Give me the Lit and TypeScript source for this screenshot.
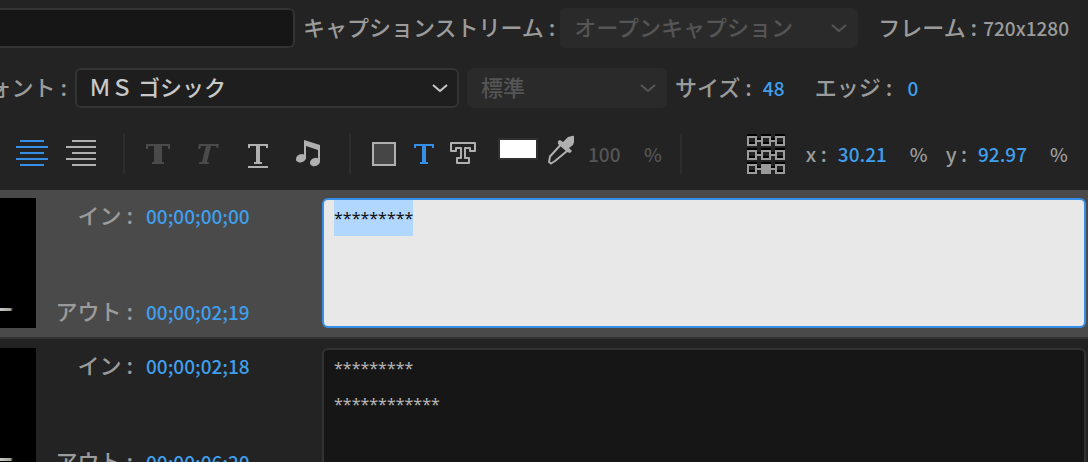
import { LitElement, html, css, svg } from "lit";
import { customElement, property, query } from "lit/decorators.js";
import { classMap } from "lit/directives/class-map.js";

const shared = css`
  * {
    box-sizing: border-box;
  }
  button,
  input,
  select,
  textarea {
    font: inherit;
    color: inherit;
    margin: 0;
    padding: 0;
    border: 0;
    border-radius: 0;
    background: none;
    outline: none;
    appearance: none;
  }
  label,
  .label {
    font-size: 22px;
    color: #9b9b9b;
    white-space: pre;
    padding-bottom: 4px;
  }
  .value {
    font-size: 19px;
    color: #3f9fec;
  }
`;

interface Caption {
  start: string;
  end: string;
  text: string;
  active: boolean;
}

@customElement("caption-row")
export class CaptionRow extends LitElement {
  @property({ attribute: false }) caption!: Caption;
  @query("textarea") private area!: HTMLTextAreaElement;

  static styles = [
    shared,
    css`
      :host {
        display: block;
      }
      .row {
        display: flex;
        padding: 8px 2px 9px 0;
        border-bottom: 2px solid #323232;
      }
      .active {
        background: #4a4a4a;
      }
      .thumb {
        flex: none;
        width: 36px;
        background: #000;
        display: flex;
        flex-direction: column;
        justify-content: flex-end;
        padding-bottom: 17px;
      }
      .glint {
        width: 13px;
        height: 3px;
        background: linear-gradient(90deg, #c8c8c8, #a8a49c 80%, #000);
      }
      .times {
        flex: none;
        width: 286px;
        display: flex;
        flex-direction: column;
        justify-content: space-between;
      }
      .time {
        display: grid;
        grid-template-columns: 97px 1fr;
        column-gap: 13px;
        height: 34px;
      }
      .time label {
        text-align: right;
        line-height: 32px;
      }
      .time input {
        width: 120px;
        height: 36px;
        line-height: 36px;
      }
      textarea {
        flex: 1;
        min-width: 0;
        height: 130px;
        resize: none;
        overflow: hidden;
        border: 2px solid #333;
        border-radius: 6px;
        padding: 0 10px;
        background: #161616;
        color: #b4b4b4;
        font-family: "Noto Sans", "Noto Sans CJK JP", sans-serif;
        font-weight: 400;
        font-size: 16px;
        line-height: 36px;
      }
      .active textarea {
        border-color: #378ee6;
        background: #e8e8e8;
        color: #101010;
      }
      textarea::selection {
        background: #b2d7ff;
        color: #101010;
      }
    `,
  ];

  firstUpdated() {
    if (this.caption.active) {
      this.area.focus();
      this.area.select();
    }
  }

  render() {
    const c = this.caption;
    return html`
      <div class=${classMap({ row: true, active: c.active })}>
        <div class="thumb"><div class="glint"></div></div>
        <div class="times">
          <div class="time">
            <label for="in">イン :</label>
            <input id="in" class="value" .value=${c.start} />
          </div>
          <div class="time">
            <label for="out">アウト :</label>
            <input id="out" class="value" .value=${c.end} />
          </div>
        </div>
        <textarea aria-label="キャプション" spellcheck="false" .value=${c.text}></textarea>
      </div>
    `;
  }
}

const bars = (short: number, long: number, right?: number) =>
  [0, 1, 2, 3, 4].map((i) => {
    const x = i % 2 ? long : short;
    const w = i % 2 ? (right ?? 50 - long) - long : (right ?? 50 - short) - short;
    return svg`<rect x=${x} y=${6 + i * 6} width=${w} height="2"/>`;
  });

const anchorCells = [0, 1, 2].flatMap((r) =>
  [0, 1, 2].map((c) => {
    const x = c * 14;
    const y = 2 + r * 14;
    const on = r === 2 && c === 1;
    return svg`
      <rect x=${x} y=${y - 2} width="10" height="2" fill="#000"/>
      ${c < 2
        ? svg`<rect x=${x + 10} y=${y + 4} width="4" height="2"/>
              <rect x=${x + 10} y=${y + 2} width="4" height="2" fill="#000"/>`
        : null}
      ${on
        ? svg`<rect x=${x} y=${y} width="10" height="10"/>`
        : svg`<path d="M${x} ${y}h10v10h-10zM${x + 2} ${y + 2}v6h6v-6z" fill-rule="evenodd"/>
              <rect x=${x + 2} y=${y + 6} width="6" height="2" fill="#000"/>`}
    `;
  })
);

const chevron = html`<svg class="chevron" width="16" height="8" viewBox="0 0 16 8" aria-hidden="true">
  <path d="M1 1L8 7L15 1" fill="none" stroke="currentColor" stroke-width="2" />
</svg>`;

@customElement("app-root")
export class AppRoot extends LitElement {
  private captions: Caption[] = [
    { start: "00;00;00;00", end: "00;00;02;19", text: "*********", active: true },
    { start: "00;00;02;18", end: "00;00;06;20", text: "*********\n************", active: false },
  ];

  static styles = [
    shared,
    css`
      :host {
        display: block;
        height: 100vh;
        overflow: hidden;
        background: #232323;
        color: #b0b0b0;
        font-family: "Noto Sans CJK JP", "Noto Sans", sans-serif;
        font-weight: 500;
        line-height: 40px;
      }
      .bar {
        display: flex;
        align-items: center;
        height: 40px;
      }
      .settings {
        display: grid;
        gap: 20px;
        padding-top: 8px;
      }
      .search {
        flex: 1;
        min-width: 0;
        height: 40px;
        border: 2px solid #333;
        border-left: 0;
        border-radius: 0 6px 6px 0;
        background: #161616;
      }
      .pick {
        display: grid;
        grid-template-columns: 1fr 16px;
        align-items: center;
        height: 40px;
        padding-right: 9px;
        border: 2px solid #333;
        border-radius: 6px;
        background: #1e1e1e;
        color: #c8c8c8;
        font-size: 22px;
      }
      .pick select {
        grid-area: 1 / 1 / 2 / 3;
        height: 36px;
        padding: 0 0 4px 12px;
        line-height: 32px;
        opacity: 1;
      }
      .chevron {
        grid-area: 1 / 2;
        pointer-events: none;
      }
      .off {
        border-color: #2a2a2a;
        background: #2a2a2a;
        color: #555;
      }
      .stream {
        width: 298px;
        margin: 0 20px 0 5px;
      }
      .font {
        width: 384px;
        margin: 0 8px;
      }
      .style {
        width: 200px;
        margin-right: 8px;
      }
      .first {
        margin-left: 8px;
      }
      .frame {
        font-size: 19px;
        margin: 0 19px 0 6px;
        color: #9b9b9b;
      }
      .clip {
        display: flex;
        justify-content: flex-end;
        width: 67px;
        overflow: hidden;
      }
      .number {
        width: 52px;
        height: 40px;
        margin-left: 11px;
      }
      .edge {
        margin-left: 15px;
      }
      .tools {
        margin: 26px 0 16px;
        padding-left: 7px;
      }
      .tool {
        flex: none;
        display: flex;
        width: 50px;
        height: 40px;
        fill: currentColor;
      }
      .narrow {
        width: 40px;
      }
      .on {
        color: #378ee6;
      }
      .dim {
        color: #4a4a4a;
      }
      .rule {
        flex: none;
        width: 2px;
        height: 40px;
        background: #2d2d2d;
      }
      .lead {
        margin: 0 8px 0 16px;
      }
      .mid {
        margin: 0 13px 0 16px;
      }
      .tail {
        margin: 0 65px 0 18px;
      }
      .swatch {
        align-self: flex-start;
        width: 40px;
        height: 22px;
        margin: 4px 3px 0 14px;
        border: 2px solid #303030;
        background: #fff;
      }
      .opacity {
        width: 50px;
        height: 40px;
        margin-left: 7px;
        font-size: 19px;
        color: #555;
      }
      .unit {
        font-size: 19px;
        color: #9b9b9b;
      }
      .unit.faint {
        color: #555;
        margin-left: 6px;
      }
      .anchor {
        color: #9b9b9b;
        width: 38px;
      }
      .axis {
        font-size: 20px;
        margin-left: 21px;
        padding-bottom: 0;
      }
      .axis-y {
        margin-left: 18px;
      }
      .coord {
        width: 60px;
        height: 40px;
        margin: 0 12px 0 11px;
      }
      .list {
        display: grid;
        gap: 1px;
      }
    `,
  ];

  render() {
    return html`
      <div class="settings">
        <div class="bar">
          <input class="search" aria-label="検索" />
          <label class="first" for="stream">キャプションストリーム :</label>
          <div class="pick off stream">
            <select id="stream" disabled><option>オープンキャプション</option></select>
            ${chevron}
          </div>
          <span class="label">フレーム :</span>
          <span class="frame">720x1280</span>
        </div>
        <div class="bar">
          <div class="clip"><label for="font">フォント :</label></div>
          <div class="pick font">
            <select id="font"><option>ＭＳ ゴシック</option></select>
            ${chevron}
          </div>
          <div class="pick off style">
            <select aria-label="スタイル" disabled><option>標準</option></select>
            ${chevron}
          </div>
          <label for="size">サイズ :</label>
          <input id="size" class="value number" value="48" />
          <label for="edge">エッジ :</label>
          <input id="edge" class="value number edge" value="0" />
        </div>
      </div>

      <div class="bar tools">
        <button class="tool on" aria-label="中央揃え">
          <svg width="50" height="40" shape-rendering="crispEdges">${bars(13, 9)}</svg>
        </button>
        <button class="tool" aria-label="右揃え">
          <svg width="50" height="40" shape-rendering="crispEdges">${bars(15, 9, 39)}</svg>
        </button>
        <div class="rule lead"></div>
        <button class="tool dim" aria-label="太字">
          <svg width="50" height="40"><path d="M13 10H37V15H35V13Q35 12 33 12H29V28H31V30H19V28H21V12H17Q15 12 15 13V15H13Z" /></svg>
        </button>
        <button class="tool dim" aria-label="斜体">
          <svg width="50" height="40"><path d="M16 10H36L35 14H33.500V12H28L24 28H26L25.500 30H16L16.500 28H19L23 12H18L17 15H15Z" /></svg>
        </button>
        <button class="tool" aria-label="下線">
          <svg width="50" height="40"><path d="M15 10H35V14H33V12H27V28H29V30H21V28H23V12H17V14H15ZM15 32H35V34H15Z" /></svg>
        </button>
        <button class="tool" aria-label="音符">
          <svg width="50" height="40">
            <path d="M21 6L37 11V28H35V16L23 12V25H21Z" />
            <ellipse cx="18" cy="24.300" rx="5.200" ry="4" transform="rotate(-22 18 24.3)" />
            <ellipse cx="32" cy="28" rx="5.200" ry="4" transform="rotate(-22 32 28)" />
          </svg>
        </button>
        <div class="rule mid"></div>
        <button class="tool narrow" aria-label="背景色">
          <svg width="40" height="40"><rect x="9" y="9" width="22" height="22" fill="#464646" stroke="currentColor" stroke-width="2" /></svg>
        </button>
        <button class="tool narrow on" aria-label="テキスト色">
          <svg width="40" height="40"><path d="M10 10H30V14H28V12H22V28H24V30H16V28H18V12H12V14H10Z" /></svg>
        </button>
        <button class="tool narrow" aria-label="エッジ色">
          <svg width="40" height="40">
            <path d="M7 9H31V17H26V14H21V24H25V29H13V24H17V14H12V17H7Z" fill="none" stroke="currentColor" stroke-width="2" stroke-linejoin="round" />
          </svg>
        </button>
        <button class="swatch" aria-label="カラー"></button>
        <button class="tool narrow" aria-label="スポイト">
          <svg width="40" height="40">
            <path d="M31 2Q33 1 33 3V8L32 11L28 14L31 17L29 19L26 18L17 10V7L19 6L22 8L27 3Z" />
            <path d="M19.500 11L9 22.500L8 28L10 29.500L14 27L26 17" fill="none" stroke="currentColor" stroke-width="2" stroke-linejoin="round" />
          </svg>
        </button>
        <input class="opacity" aria-label="不透明度" value="100" disabled />
        <span class="unit faint">%</span>
        <div class="rule tail"></div>
        <button class="tool anchor" aria-label="位置">
          <svg width="38" height="40" shape-rendering="crispEdges">${anchorCells}</svg>
        </button>
        <label class="axis" for="x">x :</label>
        <input id="x" class="value coord" value="30.21" />
        <span class="unit">%</span>
        <label class="axis axis-y" for="y">y :</label>
        <input id="y" class="value coord" value="92.97" />
        <span class="unit">%</span>
      </div>

      <div class="list">
        ${this.captions.map((c) => html`<caption-row .caption=${c}></caption-row>`)}
      </div>
    `;
  }
}
